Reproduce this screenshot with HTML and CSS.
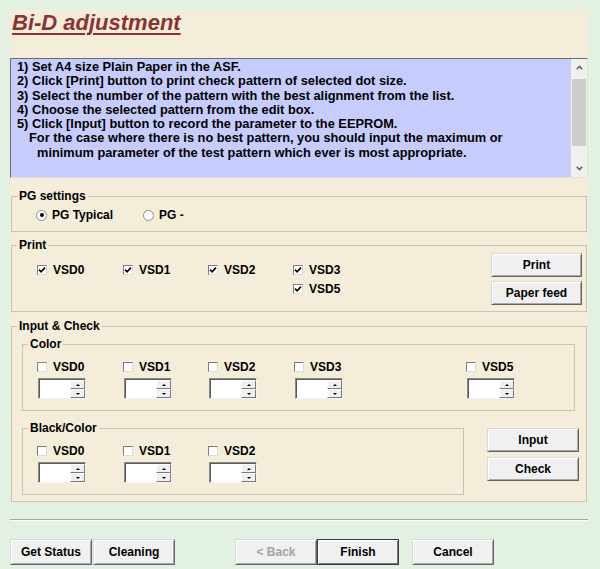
FILE: index.html
```html
<!DOCTYPE html>
<html>
<head>
<meta charset="utf-8">
<title>Bi-D adjustment</title>
<link rel="stylesheet" href="styles.css">
</head>
<body>
<div class="panel">
  <h1 class="title">Bi-D adjustment</h1>
  <div class="memo">
    <div class="memo-text">
      <div>1) Set A4 size Plain Paper in the ASF.</div>
      <div>2) Click [Print] button to print check pattern of selected dot size.</div>
      <div>3) Select the number of the pattern with the best alignment from the list.</div>
      <div>4) Choose the selected pattern from the edit box.</div>
      <div>5) Click [Input] button to record the parameter to the EEPROM.</div>
      <div class="ind1">For the case where there is no best pattern, you should input the maximum or</div>
      <div class="ind2">minimum parameter of the test pattern which ever is most appropriate.</div>
    </div>
    <div class="scrollbar">
      <div class="sb-btn"><svg width="7" height="5" viewBox="0 0 7 5"><path d="M0.8 4.2 L3.5 1.3 L6.2 4.2" fill="none" stroke="#5a5a5a" stroke-width="1.5"/></svg></div>
      <div class="sb-track"><div class="sb-thumb"></div></div>
      <div class="sb-btn"><svg width="7" height="5" viewBox="0 0 7 5"><path d="M0.8 0.8 L3.5 3.7 L6.2 0.8" fill="none" stroke="#5a5a5a" stroke-width="1.5"/></svg></div>
    </div>
  </div>

  <fieldset class="group group-pg">
    <legend>PG settings</legend>
    <div class="pg-body">
      <label class="opt opt-wide"><span class="radio on"></span>PG Typical</label>
      <label class="opt"><span class="radio"></span>PG -</label>
    </div>
  </fieldset>

  <fieldset class="group group-print">
    <legend>Print</legend>
    <div class="print-body">
      <div class="cb-grid">
        <label class="opt opt-cb"><span class="cb"><svg width="8" height="8" viewBox="0 0 8 8"><path d="M1 3.6 L3.1 5.8 L7 1.6" fill="none" stroke="#000" stroke-width="1.6"/></svg></span>VSD0</label>
        <label class="opt opt-cb"><span class="cb"><svg width="8" height="8" viewBox="0 0 8 8"><path d="M1 3.6 L3.1 5.8 L7 1.6" fill="none" stroke="#000" stroke-width="1.6"/></svg></span>VSD1</label>
        <label class="opt opt-cb"><span class="cb"><svg width="8" height="8" viewBox="0 0 8 8"><path d="M1 3.6 L3.1 5.8 L7 1.6" fill="none" stroke="#000" stroke-width="1.6"/></svg></span>VSD2</label>
        <label class="opt opt-cb"><span class="cb"><svg width="8" height="8" viewBox="0 0 8 8"><path d="M1 3.6 L3.1 5.8 L7 1.6" fill="none" stroke="#000" stroke-width="1.6"/></svg></span>VSD3</label>
        <label class="opt opt-cb col4"><span class="cb"><svg width="8" height="8" viewBox="0 0 8 8"><path d="M1 3.6 L3.1 5.8 L7 1.6" fill="none" stroke="#000" stroke-width="1.6"/></svg></span>VSD5</label>
      </div>
      <div class="btn-col btn-col-print">
        <button class="btn btn-side">Print</button>
        <button class="btn btn-side">Paper feed</button>
      </div>
    </div>
  </fieldset>

  <fieldset class="group group-input">
    <legend>Input &amp; Check</legend>
    <fieldset class="group sub sub-color">
      <legend>Color</legend>
      <div class="spin-grid color-grid">
        <div class="item"><label class="opt opt-cb"><span class="cb"></span>VSD0</label><div class="spin"><div class="spin-field"></div><div class="spin-btns"><span class="up"></span><span class="down"></span></div></div></div>
        <div class="item"><label class="opt opt-cb"><span class="cb"></span>VSD1</label><div class="spin"><div class="spin-field"></div><div class="spin-btns"><span class="up"></span><span class="down"></span></div></div></div>
        <div class="item"><label class="opt opt-cb"><span class="cb"></span>VSD2</label><div class="spin"><div class="spin-field"></div><div class="spin-btns"><span class="up"></span><span class="down"></span></div></div></div>
        <div class="item"><label class="opt opt-cb"><span class="cb"></span>VSD3</label><div class="spin"><div class="spin-field"></div><div class="spin-btns"><span class="up"></span><span class="down"></span></div></div></div>
        <div class="item"><label class="opt opt-cb"><span class="cb"></span>VSD5</label><div class="spin"><div class="spin-field"></div><div class="spin-btns"><span class="up"></span><span class="down"></span></div></div></div>
      </div>
    </fieldset>
    <div class="bc-row">
      <fieldset class="group sub sub-black">
        <legend>Black/Color</legend>
        <div class="spin-grid black-grid">
          <div class="item"><label class="opt opt-cb"><span class="cb"></span>VSD0</label><div class="spin"><div class="spin-field"></div><div class="spin-btns"><span class="up"></span><span class="down"></span></div></div></div>
          <div class="item"><label class="opt opt-cb"><span class="cb"></span>VSD1</label><div class="spin"><div class="spin-field"></div><div class="spin-btns"><span class="up"></span><span class="down"></span></div></div></div>
          <div class="item"><label class="opt opt-cb"><span class="cb"></span>VSD2</label><div class="spin"><div class="spin-field"></div><div class="spin-btns"><span class="up"></span><span class="down"></span></div></div></div>
        </div>
      </fieldset>
      <div class="btn-col btn-col-ic">
        <button class="btn btn-ic">Input</button>
        <button class="btn btn-ic">Check</button>
      </div>
    </div>
  </fieldset>
</div>

<div class="sep"></div>

<div class="footer">
  <button class="btn btn-foot">Get Status</button>
  <button class="btn btn-foot btn-adj">Cleaning</button>
  <button class="btn btn-foot btn-disabled btn-back">&lt; Back</button>
  <button class="btn btn-foot btn-default">Finish</button>
  <button class="btn btn-foot btn-cancel">Cancel</button>
</div>
</body>
</html>
```

FILE: styles.css
```css
* { box-sizing: border-box; }

body {
  margin: 0;
  width: 600px;
  height: 569px;
  overflow: hidden;
  background: #e2f1e1;
  font-family: "Liberation Sans", Arial, sans-serif;
  font-size: 12px;
  font-weight: bold;
  color: #000;
}

.panel {
  margin: 10px 0 0 10px;
  width: 578px;
  background: #f3edda;
  padding-bottom: 1px;
}

.title {
  margin: 0;
  height: 48px;
  padding-left: 2px;
  font-size: 22px;
  line-height: 25px;
  font-style: italic;
  font-weight: bold;
  color: #8b3232;
  text-decoration: underline;
  text-decoration-thickness: 2px;
  text-underline-offset: 3px;
}

/* instructions memo */
.memo {
  display: flex;
  height: 120px;
  background: #c6ccfb;
  border: 1px solid;
  border-color: #6c6c6c #e2e2e2 #e2e2e2 #6c6c6c;
}
.memo-text {
  flex: 1;
  padding: 1px 0 0 6px;
  font-size: 12.8px;
  line-height: 14.25px;
  white-space: nowrap;
  overflow: hidden;
}
.ind1 { padding-left: 12px; }
.ind2 { padding-left: 20px; }

.scrollbar {
  width: 16px;
  display: flex;
  flex-direction: column;
  background: #f0f0f0;
}
.sb-btn {
  height: 17px;
  display: flex;
  align-items: center;
  justify-content: center;
}
.sb-track { flex: 1; }
.sb-thumb {
  margin: 3px 1px 0 1px;
  height: 67px;
  background: #cdcdcd;
}

/* group boxes */
.group {
  margin: 0 1px;
  padding: 0;
  min-width: 0;
  border: 1px solid #c8c4b6;
}
.group legend {
  margin-left: 5px;
  padding: 0 2px;
  line-height: 14px;
}

.group-pg { margin-top: 11px; }
.pg-body {
  display: flex;
  padding: 4px 0 8px 24px;
}
.opt {
  display: flex;
  align-items: center;
  gap: 5px;
  height: 16px;
}
.opt-wide { width: 107px; }
.opt-cb { gap: 6px; }

.radio {
  width: 11px;
  height: 11px;
  border-radius: 50%;
  background: #fff;
  border: 1px solid #8c8c8c;
  display: flex;
  align-items: center;
  justify-content: center;
}
.radio.on::after {
  content: "";
  width: 4px;
  height: 4px;
  border-radius: 50%;
  background: #000;
}

.cb {
  width: 10px;
  height: 10px;
  background: #fff;
  border: 1px solid;
  border-color: #7c7c7c #dcdcdc #dcdcdc #7c7c7c;
  display: flex;
  align-items: center;
  justify-content: center;
}

.group-print { margin-top: 6px; }
.print-body {
  display: flex;
  padding: 1px 4px 6px 25px;
}
.cb-grid {
  display: grid;
  grid-template-columns: 86px 85px 85px auto;
  grid-auto-rows: 18px;
  row-gap: 1px;
  margin-top: 9px;
  align-content: start;
}
.col4 { grid-column: 4; }

.btn-col {
  display: flex;
  flex-direction: column;
}
.btn-col-print {
  margin-left: auto;
  gap: 4px;
}

/* buttons */
.btn {
  font: inherit;
  color: #000;
  padding: 0;
  background: #f0f0f0;
  border: 1px solid;
  border-color: #d8d8d8 #646464 #646464 #d8d8d8;
  box-shadow: inset 1px 1px 0 #fff, inset -1px -1px 0 #a8a8a8;
}
.btn-side { width: 91px; height: 24px; }
.btn-ic { width: 92px; height: 24px; }

/* input & check */
.group-input { margin-top: 7px; }
.sub-color { margin: 4px 11px 0 10px; }
.spin-grid {
  display: grid;
  padding: 8px 0 11px 14px;
}
.color-grid { grid-template-columns: 86px 85px 86px 172px auto; }
.black-grid { grid-template-columns: 86px 85px 86px; }
.item {
  display: flex;
  flex-direction: column;
}
.spin {
  margin: 3px 0 0 1px;
  width: 48px;
  height: 21px;
  display: flex;
  background: #fff;
  border: 1px solid;
  border-color: #8a8a8a #f4f4f4 #f4f4f4 #8a8a8a;
  box-shadow: inset 1px 1px 0 #5a5a5a;
}
.spin-field { flex: 1; }
.spin-btns {
  width: 15px;
  display: flex;
  flex-direction: column;
  padding: 1px 0 0 0;
}
.spin-btns span {
  flex: 1;
  background: #f0f0f0;
  border: 1px solid;
  border-color: #fff #7a7a7a #7a7a7a #fff;
  display: flex;
  align-items: center;
  justify-content: center;
}
.spin-btns .up::before {
  content: "";
  border-left: 2px solid transparent;
  border-right: 2px solid transparent;
  border-bottom: 2px solid #000;
}
.spin-btns .down::before {
  content: "";
  border-left: 2px solid transparent;
  border-right: 2px solid transparent;
  border-top: 2px solid #000;
}

.bc-row {
  display: flex;
  margin: 10px 0 6px 10px;
}
.sub-black {
  margin: 0;
  width: 442px;
}
.btn-col-ic {
  margin: 7px 0 0 23px;
  gap: 5px;
}

/* bottom */
.sep {
  margin: 16px 0 0 10px;
  width: 578px;
  height: 2px;
  border-top: 1px solid #a6a6a6;
  border-bottom: 1px solid #fbfbfb;
}

.footer {
  display: flex;
  margin: 18px 0 0 10px;
}
.btn-foot { width: 82px; height: 26px; }
.btn-adj { margin-left: 1px; }
.btn-back { margin-left: 60px; }
.btn-cancel { margin-left: 13px; }
.btn-disabled { color: #a3a3a3; }
.btn-default {
  border: 1px solid #3a3a3a;
  box-shadow: inset 1px 1px 0 #fff, inset -1px -1px 0 #7a7a7a;
}
```
